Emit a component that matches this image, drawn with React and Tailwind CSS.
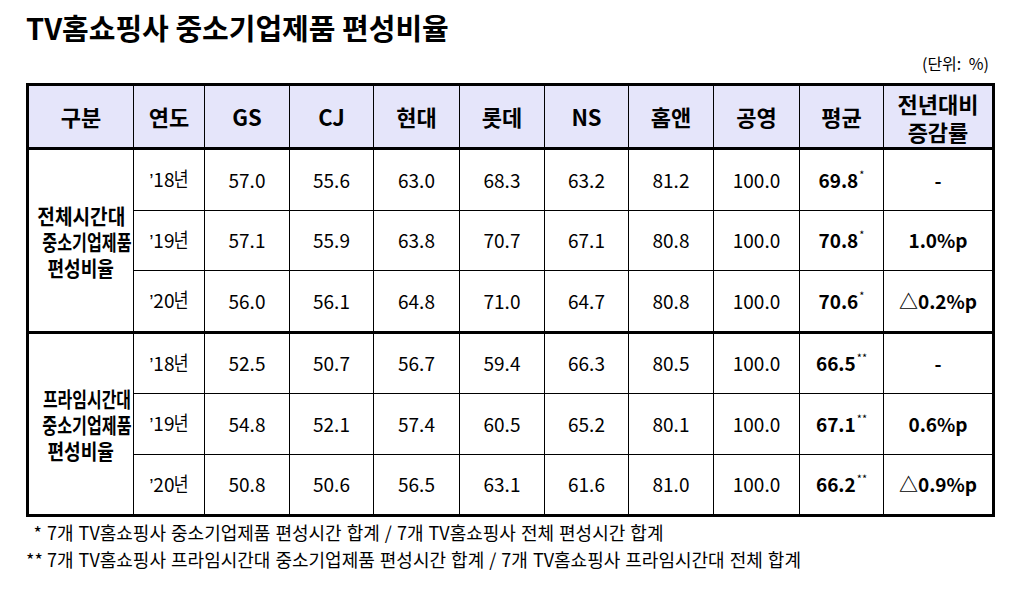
import React from "react";

const cols = [106, 71, 85, 84, 86, 85, 84, 85, 86, 84, 110];
const heads = ["GS", "CJ", "현대", "롯데", "NS", "홈앤", "공영", "평균"];

const sections = [
    {
        label: [
            ["전체시간대", "scale-x-[0.91]"],
            ["중소기업제품", "scale-x-[0.77]"],
            ["편성비율", "scale-x-[0.86]"],
        ],
        mark: "*",
        rows: [
            { year: "18", h: "h-[62px]", vals: ["57.0", "55.6", "63.0", "68.3", "63.2", "81.2", "100.0"], avg: "69.8", diff: "-" },
            { year: "19", h: "h-[60px]", vals: ["57.1", "55.9", "63.8", "70.7", "67.1", "80.8", "100.0"], avg: "70.8", diff: "1.0%p" },
            { year: "20", h: "h-[62px]", vals: ["56.0", "56.1", "64.8", "71.0", "64.7", "80.8", "100.0"], avg: "70.6", diff: "△0.2%p" },
        ],
    },
    {
        label: [
            ["프라임시간대", "scale-x-[0.76]"],
            ["중소기업제품", "scale-x-[0.77]"],
            ["편성비율", "scale-x-[0.86]"],
        ],
        mark: "**",
        rows: [
            { year: "18", h: "h-[61px]", vals: ["52.5", "50.7", "56.7", "59.4", "66.3", "80.5", "100.0"], avg: "66.5", diff: "-" },
            { year: "19", h: "h-[61px]", vals: ["54.8", "52.1", "57.4", "60.5", "65.2", "80.1", "100.0"], avg: "67.1", diff: "0.6%p" },
            { year: "20", h: "h-[61px]", vals: ["50.8", "50.6", "56.5", "63.1", "61.6", "81.0", "100.0"], avg: "66.2", diff: "△0.9%p" },
        ],
    },
];

export default function App() {
    return (
        <div className="w-[1027px] h-[589px] bg-white text-black font-['Noto_Sans_CJK_KR',sans-serif] pl-[26px] overflow-hidden">
            <div className="h-[52px] pt-[10px] text-[29px] leading-[34px] font-bold whitespace-nowrap">
                TV홈쇼핑사 중소기업제품 편성비율
            </div>
            <div className="h-[31px] w-[966px] flex justify-end pr-[3px] text-[16px] leading-[20px] pt-[1px] [word-spacing:4px]">
                (단위: %)
            </div>
            <table className="table-fixed border-collapse border-[3px] border-black w-[966px]">
                <colgroup>
                    {cols.map((w, i) => (
                        <col key={i} style={{ width: w }} />
                    ))}
                </colgroup>
                <thead>
                    <tr className="h-[64px] bg-[#e5e5fa] text-[22px] font-bold">
                        <th className="border border-black border-b-[3px]">구분</th>
                        <th className="border border-black border-b-[3px]">연도</th>
                        {heads.map((h) => (
                            <th key={h} className="border border-black border-b-[3px]">{h}</th>
                        ))}
                        <th className="border border-black border-b-[3px] leading-[28px]">
                            전년대비
                            <br />
                            증감률
                        </th>
                    </tr>
                </thead>
                {sections.map((s, si) => (
                    <tbody key={si} className="border-b-[3px] border-black">
                        {s.rows.map((r, ri) => (
                            <tr key={r.year} className={`${r.h} text-[19px] text-center`}>
                                {ri === 0 && (
                                    <td rowSpan={3} className="border border-black font-bold text-[21px] leading-[26px] whitespace-nowrap">
                                        {s.label.map(([t, sc]) => (
                                            <div key={t}>
                                                <span className={`inline-block ${sc}`}>{t}</span>
                                            </div>
                                        ))}
                                    </td>
                                )}
                                <td className="border border-black whitespace-nowrap">
                                    <span className="font-['Liberation_Sans',sans-serif]">’</span>
                                    {r.year}
                                    <span className="inline-block scale-x-[0.8] -ml-[2px] -mr-[2px] text-[20px]">년</span>
                                </td>
                                {r.vals.map((v, vi) => (
                                    <td key={vi} className="border border-black">{v}</td>
                                ))}
                                <td className="border border-black font-bold whitespace-nowrap">
                                    {r.avg}
                                    <sup className="text-[11px] font-normal -top-[9px] ml-[1px]">{s.mark}</sup>
                                </td>
                                <td className="border border-black font-bold whitespace-nowrap">{r.diff}</td>
                            </tr>
                        ))}
                    </tbody>
                ))}
            </table>
            <div className="pt-[2px] text-[18px] leading-[27px] [word-spacing:1px] whitespace-nowrap">
                <div>
                    <span className="inline-block w-[16px] text-right">*</span> 7개 TV홈쇼핑사 중소기업제품 편성시간 합계 / 7개 TV홈쇼핑사 전체 편성시간 합계
                </div>
                <div>
                    <span className="inline-block w-[16px] text-right">**</span> 7개 TV홈쇼핑사 프라임시간대 중소기업제품 편성시간 합계 / 7개 TV홈쇼핑사 프라임시간대 전체 합계
                </div>
            </div>
        </div>
    );
}
